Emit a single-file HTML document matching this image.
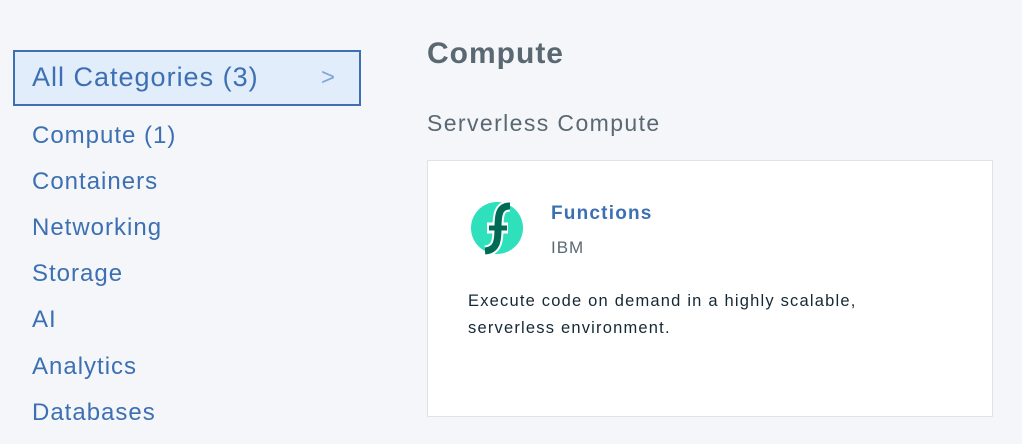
<!DOCTYPE html><html><head><style>
body{margin:0;width:1022px;height:444px;background:#f4f6fa;font-family:"Liberation Sans",sans-serif;position:relative;overflow:hidden}
.sel{position:absolute;left:13px;top:50px;width:348px;height:56px;border:2px solid #3d70b2;background:#e1edfb;box-sizing:border-box}
.sel span{position:absolute;left:17px;top:10px;font-size:27px;letter-spacing:1px;color:#3d70b2}
.sel i{position:absolute;right:24px;top:12px;font-style:normal;font-size:24px;color:#7ea6d6}
.it{position:absolute;left:32px;font-size:24px;letter-spacing:1px;color:#3d70b2}
h1{position:absolute;left:427px;top:37px;margin:0;font-size:30px;letter-spacing:1px;color:#5a6872;font-weight:bold}
h2{position:absolute;left:427px;top:110px;margin:0;font-size:23px;letter-spacing:1.4px;color:#5a6872;font-weight:normal}
.card{position:absolute;left:427px;top:160px;width:566px;height:257px;background:#fff;border:1px solid #dfe3e6;box-sizing:border-box}
</style></head><body>
<div class="sel"><span>All Categories (3)</span><i>&gt;</i></div>
<div class="it" style="top:122px">Compute (1)</div>
<div class="it" style="top:168px">Containers</div>
<div class="it" style="top:214px">Networking</div>
<div class="it" style="top:260px">Storage</div>
<div class="it" style="top:306px">AI</div>
<div class="it" style="top:353px">Analytics</div>
<div class="it" style="top:399px">Databases</div>
<h1>Compute</h1>
<h2>Serverless Compute</h2>
<div class="card">
<svg style="position:absolute;left:42px;top:40px" width="54" height="54" viewBox="0 0 54 54">
<circle cx="27" cy="27" r="26" fill="#2fe0bd"/>
<g fill="none" stroke="#fff" stroke-width="11">
<path d="M40 5 C29 5 28 14 28 27 C28 40 27 49 15 50"/>
<path d="M17 27 L38 27"/>
</g>
<g fill="none" stroke="#006b54" stroke-width="7">
<path d="M40 5 C29 5 28 14 28 27 C28 40 27 49 15 50"/>
<path d="M19 27 L37 27" stroke-width="5"/>
</g>
</svg>
<div style="position:absolute;left:123px;top:42px;font-size:19px;letter-spacing:1.2px;font-weight:bold;color:#3d70b2">Functions</div>
<div style="position:absolute;left:123px;top:77px;font-size:17px;letter-spacing:1px;color:#5a6872">IBM</div>
<div style="position:absolute;left:40px;top:127px;font-size:16.5px;letter-spacing:1.2px;color:#152935;line-height:27px">Execute code on demand in a highly scalable,<br>serverless environment.</div>
</div>
</body></html>
